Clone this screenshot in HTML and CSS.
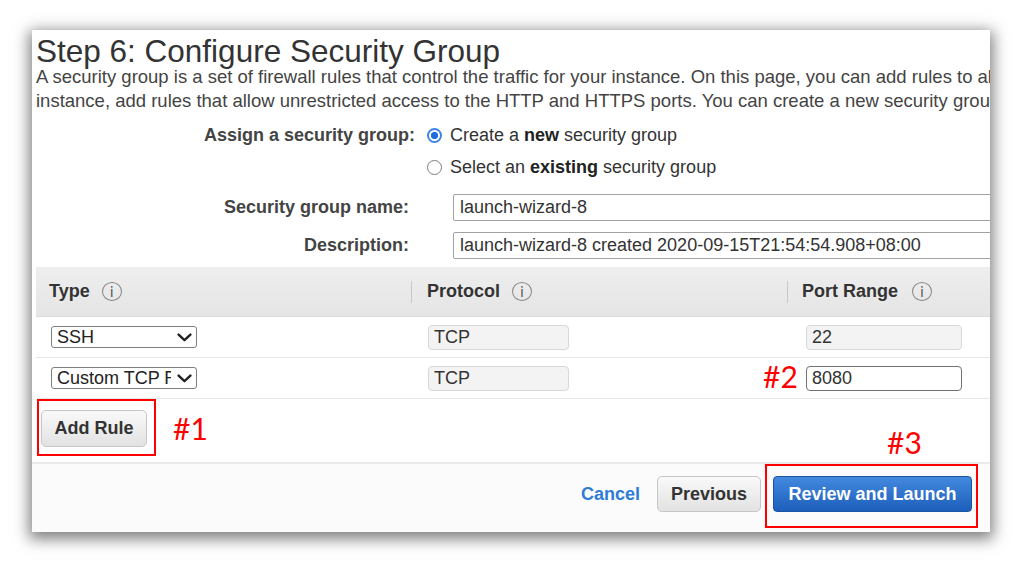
FILE: index.html
```html
<!DOCTYPE html>
<html lang="en">
<head>
<meta charset="utf-8">
<title>Step 6: Configure Security Group</title>
<link rel="stylesheet" href="styles.css">
</head>
<body>
<div class="page">
<div class="frame">
  <div class="content">
    <h1 class="title">Step 6: Configure Security Group</h1>
    <p class="desc">
      <span class="desc-line">A security group is a set of firewall rules that control the traffic for your instance. On this page, you can add rules to allow specific traffic to reach your instance.</span>
      <span class="desc-line">instance, add rules that allow unrestricted access to the HTTP and HTTPS ports. You can create a new security group or select from an existing one below.</span>
    </p>

    <div class="frow radio-row first">
      <div class="flabel">Assign a security group:</div>
      <div class="radio-opt"><span class="radio on"></span>Create a&nbsp;<b>new</b>&nbsp;security group</div>
    </div>
    <div class="frow radio-row">
      <div class="flabel"></div>
      <div class="radio-opt"><span class="radio off"></span>Select an&nbsp;<b>existing</b>&nbsp;security group</div>
    </div>
    <div class="frow input-row">
      <div class="flabel">Security group name:</div>
      <div class="text-input">launch-wizard-8</div>
    </div>
    <div class="frow input-row">
      <div class="flabel">Description:</div>
      <div class="text-input">launch-wizard-8 created 2020-09-15T21:54:54.908+08:00</div>
    </div>

    <div class="table">
      <div class="thead">
        <div class="th c1">Type<span class="info">i</span></div>
        <div class="th"><span class="th-sep"></span>Protocol<span class="info">i</span></div>
        <div class="th last"><span class="th-sep"></span>Port Range<span class="info">i</span></div>
      </div>
      <div class="trow">
        <div class="td c1">
          <div class="select"><span class="select-text">SSH</span>
            <svg class="chev" width="15" height="9" viewBox="0 0 15 9"><path d="M1.6 1.6 L7.5 7.2 L13.4 1.6" fill="none" stroke="#222" stroke-width="2.4" stroke-linecap="round" stroke-linejoin="round"/></svg>
          </div>
        </div>
        <div class="td c2"><div class="field disabled proto">TCP</div></div>
        <div class="td c3"><div class="field disabled port">22</div></div>
      </div>
      <div class="trow">
        <div class="td c1">
          <div class="select"><span class="select-text">Custom TCP Rule</span>
            <svg class="chev" width="15" height="9" viewBox="0 0 15 9"><path d="M1.6 1.6 L7.5 7.2 L13.4 1.6" fill="none" stroke="#222" stroke-width="2.4" stroke-linecap="round" stroke-linejoin="round"/></svg>
          </div>
        </div>
        <div class="td c2"><div class="field disabled proto">TCP</div></div>
        <div class="td c3"><span class="anno anno-2">#2</span><div class="field active port">8080</div></div>
      </div>
    </div>

    <div class="add-area">
      <div class="redbox add-box"><div class="btn btn-gray add">Add Rule</div></div>
      <span class="anno anno-1">#1</span>
    </div>
  </div>

  <div class="footer">
    <span class="cancel">Cancel</span>
    <div class="btn btn-gray prev">Previous</div>
    <div class="redbox review-box">
      <span class="anno anno-3">#3</span>
      <div class="btn btn-blue">Review and Launch</div>
    </div>
  </div>
</div>
</div>
</body>
</html>
```

FILE: styles.css
```css
html, body {
  margin: 0;
  background: #fff;
  font-family: "Liberation Sans", Arial, sans-serif;
}

.page {
  padding: 30px 0 30px 32px;
  min-height: 562px;
  box-sizing: border-box;
}

.frame {
  width: 958px;
  background: #fff;
  overflow: hidden;
  box-shadow: 0 4px 14px 3px rgba(0, 0, 0, 0.5);
}

.content {
  padding: 8px 0 0 4px;
}

.title {
  margin: 0;
  font-size: 31.5px;
  font-weight: normal;
  line-height: 27px;
  color: #333;
  white-space: nowrap;
}

.desc {
  margin: 0;
  font-size: 18.5px;
  line-height: 24px;
  color: #444;
}

.desc-line {
  display: block;
  white-space: nowrap;
}

.frow {
  display: flex;
  align-items: center;
}

.radio-row {
  height: 32px;
}

.radio-row.first {
  margin-top: 6px;
}

.input-row {
  height: 27px;
  margin-top: 11px;
}

.flabel {
  width: 379px;
  flex: none;
  box-sizing: border-box;
  text-align: right;
  font-weight: bold;
  font-size: 18px;
  color: #444;
  white-space: nowrap;
}

.input-row .flabel {
  padding-right: 6px;
}

.radio-opt {
  display: flex;
  align-items: center;
  margin-left: 12px;
  font-size: 18px;
  color: #333;
  white-space: nowrap;
}

.radio-opt b {
  color: #222;
}

.radio {
  width: 15px;
  height: 15px;
  border-radius: 50%;
  box-sizing: border-box;
  margin-right: 8px;
  flex: none;
}

.radio.on {
  border: 2px solid #3d86e8;
  background: radial-gradient(circle, #1e6fdc 0 3.2px, #fff 4px);
}

.radio.off {
  border: 1px solid #7c7c7c;
  background: #fff;
}

.text-input {
  margin-left: 38px;
  width: 600px;
  flex: none;
  height: 27px;
  box-sizing: border-box;
  border: 1px solid #a2a2a2;
  border-radius: 2px;
  padding-left: 6px;
  font-size: 18px;
  line-height: 25px;
  color: #333;
  white-space: nowrap;
  background: #fff;
}

.table {
  margin-top: 8px;
}

.thead {
  display: grid;
  grid-template-columns: 375px 376px 1fr;
  height: 49px;
  background: linear-gradient(#eeeeee, #e5e5e5);
  border-bottom: 1px solid #dcdcdc;
}

.th {
  display: flex;
  align-items: center;
  font-weight: bold;
  font-size: 18px;
  color: #333;
  white-space: nowrap;
}

.th.c1 {
  padding-left: 13px;
}

.th-sep {
  width: 1px;
  height: 22px;
  background: #c8c8c8;
  margin-right: 15px;
  flex: none;
}

.th.last .th-sep {
  margin-right: 14px;
}

.info {
  width: 20px;
  height: 19px;
  box-sizing: border-box;
  border: 1px solid #858585;
  border-radius: 50%;
  margin-left: 12px;
  display: flex;
  align-items: center;
  justify-content: center;
  font-family: "DejaVu Sans", sans-serif;
  font-weight: normal;
  font-size: 14px;
  color: #555;
}

.th.last .info {
  margin-left: 14px;
}

.trow {
  display: grid;
  grid-template-columns: 375px 376px 1fr;
  height: 40px;
  border-bottom: 1px solid #e6e6e6;
}

.td {
  display: flex;
  align-items: center;
}

.td.c1 {
  padding-left: 15px;
}

.td.c2 {
  padding-left: 17px;
}

.td.c3 {
  padding-left: 19px;
  position: relative;
}

.select {
  width: 146px;
  height: 22px;
  box-sizing: border-box;
  border: 1px solid #7e7e7e;
  border-radius: 3px;
  display: flex;
  align-items: center;
  padding: 0 4px 0 5px;
  background: #fff;
}

.select-text {
  width: 114px;
  flex: none;
  overflow: hidden;
  white-space: nowrap;
  font-size: 18px;
  line-height: 20px;
  color: #222;
}

.chev {
  margin-left: 6px;
  flex: none;
}

.field {
  height: 25px;
  box-sizing: border-box;
  border-radius: 4px;
  font-size: 18px;
  line-height: 23px;
  color: #333;
  padding-left: 5px;
}

.field.disabled {
  background: #f3f3f3;
  border: 1px solid #d8d8d8;
}

.field.active {
  background: #fff;
  border: 1.5px solid #727272;
}

.field.proto {
  width: 141px;
}

.field.port {
  width: 156px;
}

.anno {
  font-family: Lato, "Liberation Sans", sans-serif;
  color: #ff0000;
  font-size: 30px;
  line-height: 36px;
  white-space: nowrap;
}

.anno-2 {
  position: absolute;
  left: -24px;
  top: 0;
}

.add-area {
  height: 63px;
  display: flex;
  align-items: flex-start;
  padding-left: 1px;
}

.redbox {
  border: 2px solid #ff0000;
}

.add-box {
  padding: 9px 7px 7px 2px;
}

.btn {
  box-sizing: border-box;
  display: flex;
  align-items: center;
  justify-content: center;
  font-weight: bold;
  font-size: 18px;
  border-radius: 5px;
  white-space: nowrap;
}

.btn-gray {
  background: linear-gradient(#f9f9f9, #e2e2e2);
  border: 1px solid #c6c6c6;
  color: #333;
}

.btn.add {
  width: 106px;
  height: 37px;
}

.anno-1 {
  margin-left: 17px;
  margin-top: 11px;
}

.footer {
  height: 68px;
  border-top: 2px solid #ebebeb;
  background: #fbfbfb;
  display: flex;
  justify-content: flex-end;
  align-items: flex-start;
  padding-right: 12px;
}

.cancel {
  margin-top: 12px;
  margin-right: 17px;
  line-height: 36px;
  color: #2e7bd6;
  font-weight: bold;
  font-size: 18px;
}

.btn.prev {
  width: 104px;
  height: 36px;
  margin-top: 12px;
  margin-right: 4px;
}

.review-box {
  position: relative;
  padding: 10px 4px 14px 6px;
}

.anno-3 {
  position: absolute;
  left: 120px;
  top: -42px;
}

.btn-blue {
  width: 199px;
  height: 36px;
  background: linear-gradient(#4389de, #1d5fbc);
  border: 1px solid #1a54a4;
  border-radius: 4px;
  color: #fff;
}
```
